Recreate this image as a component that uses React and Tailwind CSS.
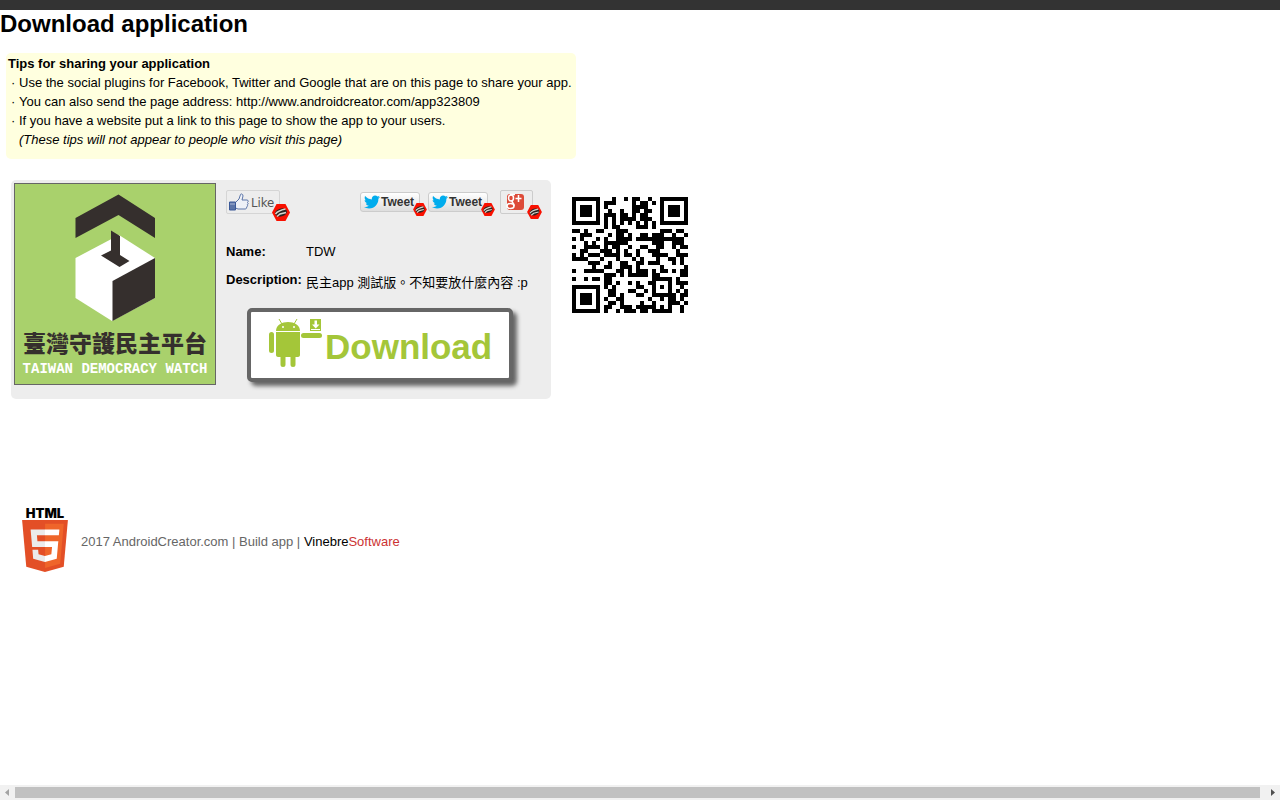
import { useMemo } from "react";
import { FaTwitter } from "react-icons/fa";

const PAGE_URL = "http://www.androidcreator.com/app323809";

const QR_SIZE = 29;
const QR_DATA_WORDS = 55;
const QR_EC_WORDS = 15;
// error level L, mask 7
const QR_FORMAT = 0b110100101110110;

function gfMultiply(a, b) {
  let result = 0;
  for (let i = 7; i >= 0; i--) {
    result = (result << 1) ^ ((result >>> 7) * 0x11d);
    result ^= ((b >>> i) & 1) * a;
  }
  return result;
}

function errorWords(data) {
  const divisor = new Array(QR_EC_WORDS).fill(0);
  divisor[QR_EC_WORDS - 1] = 1;
  let root = 1;
  for (let i = 0; i < QR_EC_WORDS; i++) {
    for (let j = 0; j < QR_EC_WORDS; j++) {
      divisor[j] = gfMultiply(divisor[j], root);
      if (j + 1 < QR_EC_WORDS) divisor[j] ^= divisor[j + 1];
    }
    root = gfMultiply(root, 2);
  }
  const result = new Array(QR_EC_WORDS).fill(0);
  data.forEach((word) => {
    const factor = word ^ result.shift();
    result.push(0);
    divisor.forEach((d, i) => {
      result[i] ^= gfMultiply(d, factor);
    });
  });
  return result;
}

function encodeText(text) {
  let bits = "0100" + text.length.toString(2).padStart(8, "0");
  for (const char of text) {
    bits += char.charCodeAt(0).toString(2).padStart(8, "0");
  }
  bits += "0000";
  const words = bits.match(/.{8}/g).map((b) => parseInt(b, 2));
  for (let pad = 0xec; words.length < QR_DATA_WORDS; pad ^= 0xec ^ 0x11) {
    words.push(pad);
  }
  return [...words, ...errorWords(words)];
}

function buildQr(text) {
  const grid = Array.from({ length: QR_SIZE }, () =>
    new Array(QR_SIZE).fill(null)
  );
  const set = (row, col, dark) => {
    if (row >= 0 && col >= 0 && row < QR_SIZE && col < QR_SIZE) {
      grid[row][col] = dark;
    }
  };

  // Timing lines
  for (let i = 0; i < QR_SIZE; i++) {
    set(6, i, i % 2 === 0);
    set(i, 6, i % 2 === 0);
  }

  // Finder squares
  [
    [3, 3],
    [3, QR_SIZE - 4],
    [QR_SIZE - 4, 3],
  ].forEach(([r, c]) => {
    for (let y = -4; y <= 4; y++) {
      for (let x = -4; x <= 4; x++) {
        const dist = Math.max(Math.abs(x), Math.abs(y));
        set(r + y, c + x, dist !== 2 && dist !== 4);
      }
    }
  });

  // Alignment square
  for (let y = -2; y <= 2; y++) {
    for (let x = -2; x <= 2; x++) {
      set(22 + y, 22 + x, Math.max(Math.abs(x), Math.abs(y)) !== 1);
    }
  }

  // Format bits
  for (let i = 0; i < 15; i++) {
    const dark = ((QR_FORMAT >> i) & 1) === 1;
    if (i < 6) set(i, 8, dark);
    else if (i < 8) set(i + 1, 8, dark);
    else if (i === 8) set(8, 7, dark);
    else set(8, 14 - i, dark);
    if (i < 8) set(8, QR_SIZE - 1 - i, dark);
    else set(QR_SIZE - 15 + i, 8, dark);
  }
  set(QR_SIZE - 8, 8, true);

  const words = encodeText(text);
  let index = 0;
  for (let right = QR_SIZE - 1; right >= 1; right -= 2) {
    if (right === 6) right = 5;
    const upward = ((right + 1) & 2) === 0;
    for (let step = 0; step < QR_SIZE; step++) {
      for (let j = 0; j < 2; j++) {
        const col = right - j;
        const row = upward ? QR_SIZE - 1 - step : step;
        if (grid[row][col] !== null) continue;
        const bit = ((words[index >> 3] || 0) >> (7 - (index & 7))) & 1;
        const flip = (((row + col) % 2) + ((row * col) % 3)) % 2 === 0;
        grid[row][col] = (bit === 1) !== flip;
        index++;
      }
    }
  }
  return grid;
}

function QrCode({ text }) {
  const path = useMemo(
    () =>
      buildQr(text)
        .flatMap((row, y) =>
          row.map((dark, x) => (dark ? `M${x} ${y}h1v1h-1z` : ""))
        )
        .join(""),
    [text]
  );
  return (
    <svg
      viewBox="0 0 29 29"
      className="mt-[17px] ml-[21px] size-[116px] shrink-0"
      shapeRendering="crispEdges"
      role="img"
      aria-label="QR code"
    >
      <path d={path} />
    </svg>
  );
}

function BlockedBadge({ className }) {
  return (
    <svg viewBox="0 0 18 17" className={`absolute ${className}`}>
      <path d="M4.5 0h9L18 8.500 13.500 17h-9L0 8.500z" fill="#f91000" />
      <ellipse
        cx="9"
        cy="8.500"
        rx="6"
        ry="4"
        transform="rotate(-15 9 8.500)"
        fill="#2b2522"
      />
      <path
        d="M3.500 10c2-3 5-4 10-5M5 12.500l3-2.500 6-1.500"
        fill="none"
        stroke="#d8d4cc"
        strokeWidth="1.500"
      />
    </svg>
  );
}

function TweetButton() {
  return (
    <button className="relative flex h-5 w-[60px] items-center gap-px rounded-[3px] border border-[#ccc] bg-linear-to-b from-white to-[#dedede] pl-[3px] text-[12px] font-bold text-[#333]">
      <FaTwitter className="size-4 shrink-0 text-[#00aced]" />
      Tweet
      <BlockedBadge className="top-[10px] left-[52px] h-[13px] w-[14px]" />
    </button>
  );
}

function LikeButton() {
  return (
    <button className="relative flex h-6 w-[54px] items-center gap-[2px] rounded-[2px] border border-[#d5d5d5] pl-[2px] font-['DejaVu_Sans_Condensed','DejaVu_Sans',sans-serif] text-[13px] text-[#555]">
      <svg viewBox="0 0 20 18" className="h-[18px] w-5 shrink-0">
        <path
          d="M6.500 9.500 10 6l1.500-4.500c.3-1 2.500-.8 2.500 1.500L13 7h5c1.500 0 1.500 2 .5 2.500 1 .5.8 2-.3 2.300.8.700.3 2-.7 2.200.5 1-.2 2-1.500 2H9l-2.500-1z"
          fill="#eef1f7"
          stroke="#5b74a8"
        />
        <path d="M.5 9h6v8h-6z" fill="#5b74a8" stroke="#3b5998" />
        <path d="M1 10h5v2H1z" fill="#8295bf" />
      </svg>
      Like
      <BlockedBadge className="top-[13px] left-[45px] h-[17px] w-[18px]" />
    </button>
  );
}

function PlusButton() {
  return (
    <button
      aria-label="Google plus"
      className="relative ml-1 flex h-6 w-[33px] items-center rounded-[2px] border border-[#ccc] pl-[5px]"
    >
      <svg viewBox="0 0 18 18" className="size-[18px]">
        <rect x="1" y="1" width="17" height="16" rx="3" fill="#dd4b39" />
        <g fill="none" stroke="#fff" strokeWidth="1.500">
          <ellipse cx="5" cy="5" rx="2.500" ry="3" />
          <path d="M4 1.500h5M7 7.500c-3 1.500 2 2.500 1 5.500M12.500 2v7M9.500 5.500h6" />
          <ellipse cx="4.500" cy="13" rx="3.500" ry="2.500" />
        </g>
      </svg>
      <BlockedBadge className="top-[14px] left-[26px] h-[14px] w-[15px]" />
    </button>
  );
}

function AppLogo() {
  return (
    <svg
      viewBox="0 0 200 200"
      className="size-[202px] shrink-0 border border-[#666] bg-[#a9d16c]"
      role="img"
      aria-label="Taiwan Democracy Watch"
    >
      <path d="M60.500 34 103.500 10.500 140 34v20L103.500 31 60.500 54z" fill="#352f2d" />
      <path d="M60.500 74 104 51l36 23v40l-43 23-36.500-23z" fill="#fff" />
      <path d="M97.500 97 140 74v40l-42.500 23z" fill="#352f2d" />
      <path d="M96 46.500 105 52v19l9.500 6-10 6L86 71.500l10-5z" fill="#352f2d" />
      <text
        x="100"
        y="168"
        textAnchor="middle"
        fill="#352f2d"
        className="font-['Noto_Sans_CJK_TC',sans-serif] text-[23px] font-black"
      >
        臺灣守護民主平台
      </text>
      <text
        x="100"
        y="189"
        textAnchor="middle"
        fill="#fff"
        className="font-['Liberation_Mono',monospace] text-[14px] font-bold"
      >
        TAIWAN DEMOCRACY WATCH
      </text>
    </svg>
  );
}

function AndroidRobot() {
  return (
    <svg viewBox="0 0 54 50" className="mb-1 h-[50px] w-[54px] shrink-0" fill="#a4c639">
      <path d="M7 13C7 7 13 4 19 4s12 3 12 9z" />
      <path d="m13 6-3-5M25 6l3-5" stroke="#a4c639" />
      <circle cx="14" cy="9" r="1" fill="#fff" />
      <circle cx="25" cy="9" r="1" fill="#fff" />
      <path d="M7 14h24v23c0 1-1 2-2 2h-2.500v7.500a2.500 2.500 0 0 1-5 0V39h-5v7.500a2.500 2.500 0 0 1-5 0V39H9c-1 0-2-1-2-2z" />
      <rect x="0" y="14" width="5" height="21" rx="2.500" />
      <rect x="32" y="15" width="21" height="5" rx="2.500" />
      <path d="M41 1h11v12H41z" />
      <path d="M45.500 2.500h2.500v4h2.500l-3.750 4-3.750-4h2.500zM42 11h9v1h-9z" fill="#fff" />
    </svg>
  );
}

function Html5Logo() {
  return (
    <div className="flex w-[46px] flex-col items-center">
      <span className="font-['Inter',sans-serif] text-[13px] leading-[14px] font-black text-black">
        HTML
      </span>
      <svg viewBox="30 0 451 512" className="h-[52px] w-[46px]">
        <path fill="#e34f26" d="M71 460 30 0h451l-41 460-185 52z" />
        <path fill="#ef652a" d="m256 472 149-41 35-394H256z" />
        <path
          fill="#ebebeb"
          d="M256 208h-75l-5-58h80V94H114l1 15 14 156h127zM256 355h-1l-63-17-4-45h-56l7 89 116 32h1z"
        />
        <path
          fill="#fff"
          d="M255 208v57h70l-7 73-63 17v59l116-32 1-10 13-149 2-15zM255 94v56h137l1-12 3-29 1-15z"
        />
      </svg>
    </div>
  );
}

function Tip({ children }) {
  return (
    <li className="flex">
      <span className="w-[11px] pl-[3px]">·</span>
      {children}
    </li>
  );
}

function App() {
  return (
    <div className="flex min-h-screen flex-col bg-white font-['Liberation_Sans',Arial,'Noto_Sans_CJK_TC',sans-serif] text-[13px] leading-[19px] text-black">
      <header className="h-[10px] bg-[#333]" />
      <h1 className="text-[24px] leading-7 font-bold">Download application</h1>

      <section className="mt-[15px] ml-[6px] w-fit rounded-[5px] bg-[#ffffdf] pt-px pr-1 pb-[10px] pl-[2px]">
        <h2 className="font-bold">Tips for sharing your application</h2>
        <ul>
          <Tip>
            Use the social plugins for Facebook, Twitter and Google that are on
            this page to share your app.
          </Tip>
          <Tip>You can also send the page address: {PAGE_URL}</Tip>
          <Tip>
            If you have a website put a link to this page to show the app to
            your users.
          </Tip>
        </ul>
        <p className="pl-[11px] italic">
          (These tips will not appear to people who visit this page)
        </p>
      </section>

      <main className="mt-[21px] ml-[11px] flex items-start">
        <div className="flex w-[540px] gap-[10px] rounded-[5px] bg-[#ededed] px-[3px] pt-[3px] pb-[14px]">
          <AppLogo />
          <div className="flex-1">
            <div className="flex h-[38px] items-center gap-2 pr-[15px]">
              <LikeButton />
              <div className="ml-auto flex items-center gap-2">
                <TweetButton />
                <TweetButton />
                <PlusButton />
              </div>
            </div>

            <table className="mt-[21px] text-left">
              <tbody>
                <tr className="h-7 align-top">
                  <th className="w-20 font-bold">Name:</th>
                  <td>TDW</td>
                </tr>
                <tr className="align-top">
                  <th className="font-bold">Description:</th>
                  <td className="pt-[3px]">
                    民主app 測試版。不知要放什麼內容 :p
                  </td>
                </tr>
              </tbody>
            </table>

            <a
              href="#download"
              className="mt-4 ml-[21px] flex h-[74px] w-[266px] items-center rounded-[5px] border-4 border-[#666] bg-white pl-[18px] text-[35px] leading-[38px] font-bold text-[#a4c639] shadow-[4px_4px_4px_#666]"
            >
              <AndroidRobot />
              <span className="mt-1 ml-[2px]">Download</span>
            </a>
          </div>
        </div>
        <QrCode text={PAGE_URL} />
      </main>

      <footer className="mt-[107px] mb-4 ml-[22px] flex items-center gap-[13px] text-[#666]">
        <Html5Logo />
        <p className="pt-1">
          2017 AndroidCreator.com | <a href="#build">Build app</a> |{" "}
          <a href="#vinebre" className="text-black">
            Vinebre<span className="text-[#c33]">Software</span>
          </a>
        </p>
      </footer>

      <div className="mt-auto flex h-[15px] items-center bg-[#f1f1f1]">
        <svg viewBox="0 0 15 15" className="size-[15px]">
          <path d="M9 4v7L5 7.500z" fill="#a3a3a3" />
        </svg>
        <div className="h-[11px] flex-1 bg-[#c1c1c1]" />
        <svg viewBox="0 0 15 15" className="ml-[5px] size-[15px]">
          <path d="M6 4v7l4-3.500z" fill="#505050" />
        </svg>
      </div>
    </div>
  );
}

export default App;
